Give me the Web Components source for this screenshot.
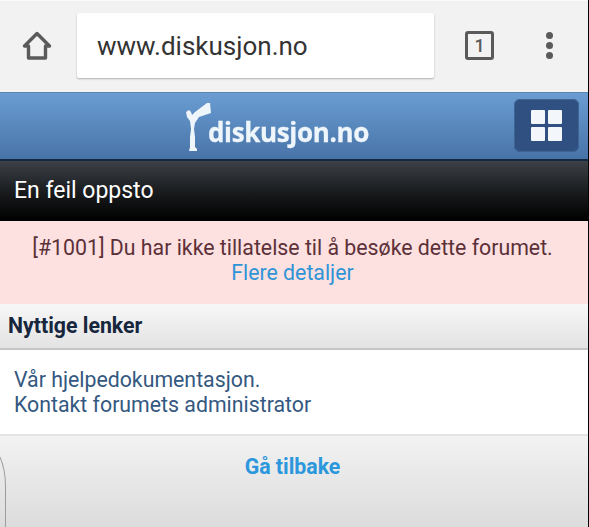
<!DOCTYPE html>
<html>
<head>
<meta charset="utf-8">
<title>diskusjon.no</title>
<style>
html, body { margin: 0; padding: 0; }
body { width: 589px; height: 527px; overflow: hidden; box-sizing: border-box; border-right: 1px solid #000; background: #fff; font-family: Roboto, "Liberation Sans", sans-serif; display: flex; flex-direction: column; }
</style>
</head>
<body>
<browser-bar url="www.diskusjon.no" tabs="1"></browser-bar>
<site-header></site-header>
<page-title>En feil oppsto</page-title>
<error-box>[#1001] Du har ikke tillatelse til å besøke dette forumet.<a slot="more">Flere detaljer</a></error-box>
<link-section heading="Nyttige lenker">
  <div>Vår hjelpedokumentasjon.</div>
  <div>Kontakt forumets administrator</div>
</link-section>
<back-bar>Gå tilbake</back-bar>

<script>
class BrowserBar extends HTMLElement {
  constructor() {
    super();
    this.attachShadow({ mode: 'open' });
    this.shadowRoot.innerHTML = `
<style>
:host { display: flex; flex: none; align-items: center; height: 92px; box-sizing: border-box; padding: 0 0 2px 21px; background: #f2f2f2; border-top: 1px solid #fafafa; }
.home { width: 32px; height: 32px; flex: none; }
.url { flex: none; width: 357px; height: 65px; box-sizing: border-box; margin-left: 24px; padding-left: 20px; background: #fff; border-radius: 2px; box-shadow: 0 1px 2px rgba(0,0,0,.28); display: flex; align-items: center; font-size: 26px; color: #333; }
.tabs { flex: none; width: 29px; height: 29px; box-sizing: border-box; margin-left: 31px; border: 3px solid #5a5a5a; border-radius: 3px; display: flex; align-items: center; justify-content: center; font-size: 18px; font-weight: 500; color: #5a5a5a; }
.menu { flex: none; margin-left: 52px; display: flex; flex-direction: column; gap: 3px; }
.menu i { width: 7px; height: 7px; border-radius: 50%; background: #5a5a5a; }
</style>
<svg class="home" viewBox="0 0 32 32"><path d="M3.500 16 16 3.500 28.500 16h-4v12h-17V16z" fill="none" stroke="#5a5a5a" stroke-width="3.400" stroke-linejoin="round"/></svg>
<div class="url"></div>
<div class="tabs"></div>
<div class="menu"><i></i><i></i><i></i></div>`;
    this.shadowRoot.querySelector('.url').textContent = this.getAttribute('url');
    this.shadowRoot.querySelector('.tabs').textContent = this.getAttribute('tabs');
  }
}

class SiteHeader extends HTMLElement {
  constructor() {
    super();
    this.attachShadow({ mode: 'open' });
    this.shadowRoot.innerHTML = `
<style>
:host { display: flex; flex: none; align-items: center; height: 69px; box-sizing: border-box; position: relative; padding-left: 186px; background: linear-gradient(#6a9dd2, #4873a8); border-top: 1px solid #5a87ad; border-bottom: 2px solid #14293f; }
.logo { display: flex; align-items: flex-end; color: #eef5fb; margin-top: 2px; }
.logo svg { width: 26px; height: 48px; flex: none; filter: blur(.4px); }
.logo span { font-family: "Open Sans", sans-serif; font-size: 26px; font-weight: 700; line-height: 34px; margin: 0 0 2px -4px; letter-spacing: -.35px; -webkit-text-stroke: .3px #eef5fb; filter: blur(.6px); }
.nav { position: absolute; right: 9px; top: 6px; width: 65px; height: 53px; border-radius: 6px; background: #305082; box-shadow: inset 0 0 0 1px #3d6594; display: grid; grid-template: 14px 14px / 14px 14px; gap: 2.500px; place-content: center; }
.nav i { background: #f3f6fa; border-radius: 1px; }
</style>
<div class="logo">
  <svg viewBox="0 0 26 48"><path d="M0 9 3 7l2 2 1 3 3-3L21 0h3l1 10-12 4-2 3-2 3-1 6 1 8v10l2 2v2H3l1-4V34l1-8-1-8-3-4z" fill="#eef5fb"/></svg>
  <span>diskusjon.no</span>
</div>
<div class="nav"><i></i><i></i><i></i><i></i></div>`;
  }
}

class PageTitle extends HTMLElement {
  constructor() {
    super();
    this.attachShadow({ mode: 'open' });
    this.shadowRoot.innerHTML = `
<style>
:host { display: flex; flex: none; align-items: center; height: 60px; box-sizing: border-box; padding: 0 14px 1px; background: linear-gradient(#3c4147, #17191b 55%, #000); color: #fff; font-size: 23px; }
</style>
<slot></slot>`;
  }
}

class ErrorBox extends HTMLElement {
  constructor() {
    super();
    this.attachShadow({ mode: 'open' });
    this.shadowRoot.innerHTML = `
<style>
:host { display: block; flex: none; height: 83px; box-sizing: border-box; padding: 14px 3px 0 0; background: #fde0e0; color: #5c3038; font-size: 21.300px; line-height: 25px; text-align: center; }
::slotted(a) { display: block; color: #2f94d6; }
</style>
<slot></slot><slot name="more"></slot>`;
  }
}

class LinkSection extends HTMLElement {
  constructor() {
    super();
    this.attachShadow({ mode: 'open' });
    this.shadowRoot.innerHTML = `
<style>
:host { display: block; flex: none; }
h2 { margin: 0; height: 46px; box-sizing: border-box; padding: 0 8px 2px; display: flex; align-items: center; background: linear-gradient(#f7f7f7, #e3e3e3); border-bottom: 2px solid #c6c6c6; color: #16263c; font-size: 21.300px; font-weight: 700; }
.links { height: 84px; box-sizing: border-box; padding: 17px 14px 0; color: #34587f; font-size: 21.300px; line-height: 25px; }
</style>
<h2></h2>
<div class="links"><slot></slot></div>`;
    this.shadowRoot.querySelector('h2').textContent = this.getAttribute('heading');
  }
}

class BackBar extends HTMLElement {
  constructor() {
    super();
    this.attachShadow({ mode: 'open' });
    this.shadowRoot.innerHTML = `
<style>
:host { display: block; flex: 1; min-height: 0; overflow: hidden; position: relative; box-sizing: border-box; padding: 18px 3px 0 0; background: linear-gradient(#f2f2f2, #dcdcdc); border-top: 2px solid #e4e4e4; color: #2b97dc; font-size: 21.300px; font-weight: 700; line-height: 26px; text-align: center; }
.corner { position: absolute; left: -14px; top: 10px; width: 20px; height: 140px; box-sizing: border-box; border: 1px solid #9c9c9c; border-radius: 0 18px 0 0 / 0 40px 0 0; }
</style>
<div class="corner"></div>
<slot></slot>`;
  }
}

customElements.define('browser-bar', BrowserBar);
customElements.define('site-header', SiteHeader);
customElements.define('page-title', PageTitle);
customElements.define('error-box', ErrorBox);
customElements.define('link-section', LinkSection);
customElements.define('back-bar', BackBar);
</script>
</body>
</html>
